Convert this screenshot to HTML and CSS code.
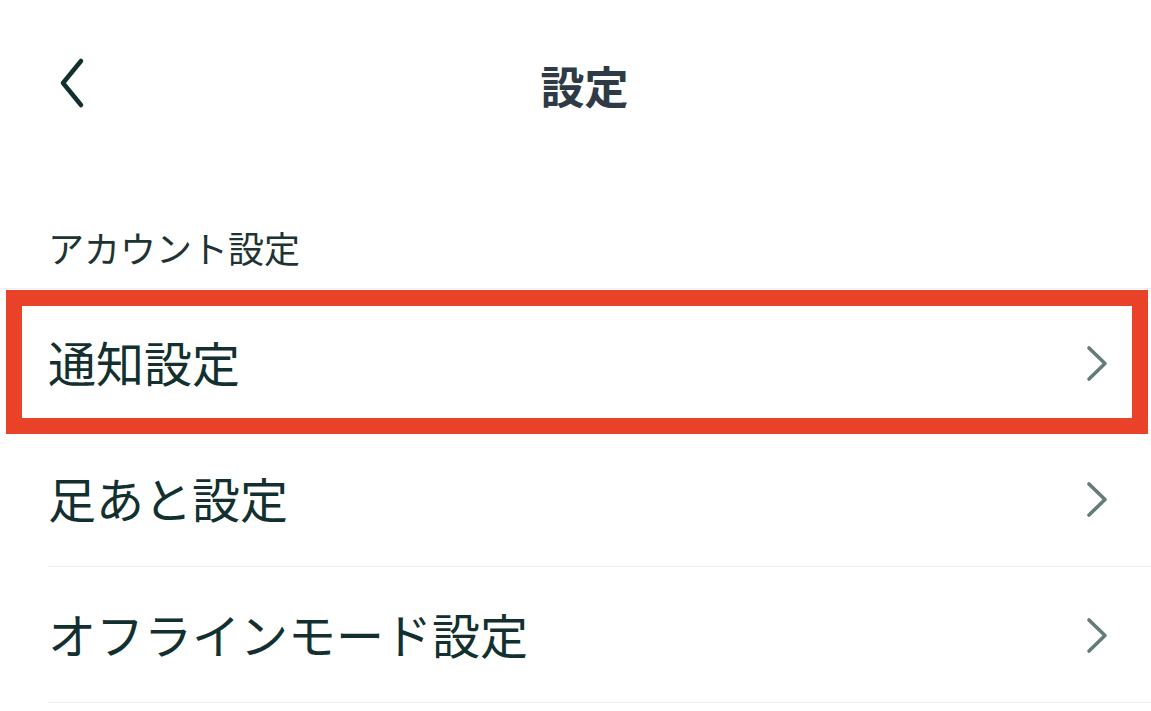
FILE: index.html
```html
<!DOCTYPE html>
<html lang="ja">
<head>
    <meta charset="UTF-8">
    <meta name="viewport" content="width=device-width, initial-scale=1.0">
    <title>設定</title>
    <link rel="stylesheet" href="styles.css">
</head>
<body>
    <header class="topbar">
        <button class="back" aria-label="戻る">
            <svg width="30" height="54" viewBox="0 0 30 54">
                <polyline points="24,4 6,26 24,48" fill="none" stroke="#12302f" stroke-width="4.5" stroke-linecap="round" stroke-linejoin="round"/>
            </svg>
        </button>
        <h1>設定</h1>
    </header>

    <div class="section-label">アカウント設定</div>

    <ul class="menu">
        <li class="menu-item highlighted">
            <span>通知設定</span>
            <svg class="chev" width="24" height="38" viewBox="0 0 24 38">
                <polyline points="4,4 20,19.5 4,35" fill="none" stroke="#637b79" stroke-width="3.6" stroke-linecap="round" stroke-linejoin="round"/>
            </svg>
        </li>
        <li class="menu-item">
            <span>足あと設定</span>
            <svg class="chev" width="24" height="38" viewBox="0 0 24 38">
                <polyline points="4,4 20,19.5 4,35" fill="none" stroke="#637b79" stroke-width="3.6" stroke-linecap="round" stroke-linejoin="round"/>
            </svg>
        </li>
        <li class="menu-item">
            <span>オフラインモード設定</span>
            <svg class="chev" width="24" height="38" viewBox="0 0 24 38">
                <polyline points="4,4 20,19.5 4,35" fill="none" stroke="#637b79" stroke-width="3.6" stroke-linecap="round" stroke-linejoin="round"/>
            </svg>
        </li>
    </ul>
</body>
</html>
```

FILE: styles.css
```css
body {
    font-family: "Noto Sans CJK JP", "Noto Sans", sans-serif;
    margin: 0;
    padding: 0;
    background: #fff;
    color: #12302f;
}

.topbar {
    position: relative;
    height: 170px;
    display: flex;
    align-items: center;
    justify-content: center;
}

.topbar h1 {
    margin: 0;
    padding-left: 18px;
    font-size: 44px;
    font-weight: 700;
    line-height: 1;
    color: #2e3a45;
}

.back {
    position: absolute;
    left: 57px;
    top: 57px;
    padding: 0;
    border: none;
    background: none;
    display: flex;
}

.section-label {
    padding: 52px 0 0 48px;
    height: 66px;
    font-size: 36px;
    line-height: 50px;
    color: #1d3432;
    border-bottom: 1px solid #eef1f1;
}

.menu {
    list-style: none;
    margin: 6px 0 0 48px;
    padding: 0;
}

.menu-item {
    position: relative;
    height: 135px;
    display: flex;
    align-items: center;
    justify-content: space-between;
    padding-right: 42px;
    font-size: 48px;
    line-height: 1;
    border-bottom: 1px solid #e9eeee;
}

.menu-item span {
    padding-bottom: 4px;
}

.highlighted::after {
    content: "";
    position: absolute;
    left: -42px;
    right: 3px;
    top: -5px;
    bottom: -4px;
    border: 16px solid #e94229;
}
```
